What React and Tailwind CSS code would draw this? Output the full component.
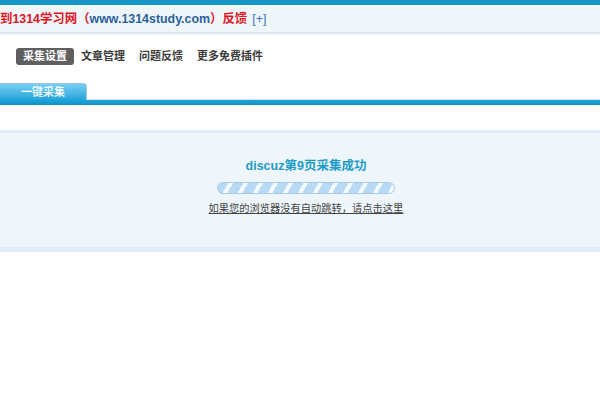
import React from 'react';

const cjk = { fontFamily: '"Liberation Sans", "Noto Sans CJK SC", sans-serif' };

export default function App() {
  const nav = ['采集设置', '文章管理', '问题反馈', '更多免费插件'];

  return (
    <div className="w-[600px] h-[396px] bg-white overflow-hidden" style={cjk}>
      {/* top header */}
      <div className="h-[5px] bg-[#1896c4]" />
      <div className="h-[27px] bg-[#eef6fa] border-t border-[#f6fbe8] flex items-center overflow-hidden">
        <div className="whitespace-nowrap text-[12.4px] font-bold leading-none">
          <span className="text-[#e0151f]">到1314学习网（</span>
          <span className="text-[#2d5f9a]">www.1314study.com</span>
          <span className="text-[#e0151f]">）反馈</span>
          <span className="ml-[5px] font-normal text-[#3f74b0]">[+]</span>
        </div>
      </div>
      <div className="h-[3px] bg-gradient-to-b from-[#d3e0e9] to-[#f4f8fb]" />

      {/* nav */}
      <div className="flex items-center pl-[16px] mt-[13px] h-[17px]">
        {nav.map((n, i) => (
          <div
            key={n}
            className={
              'h-[17px] px-[7px] flex items-center text-[11px] font-bold rounded-[3px] ' +
              (i === 0 ? 'bg-[#5f5f5f] text-white' : 'text-[#3a3a3a]')
            }
          >
            {n}
          </div>
        ))}
      </div>

      {/* tab */}
      <div className="mt-[18px] flex items-end h-[17px]">
        <div className="w-[87px] h-[17px] rounded-tr-[4px] border-r border-t border-[#9fc6d8] bg-gradient-to-b from-[#74d0f3] to-[#1fa3d9] text-white text-[11px] font-medium flex items-center justify-center">
          一键采集
        </div>
        <div className="flex-1 h-[2px] border-b border-[#d7e6ee]" />
      </div>
      <div className="h-[5px] bg-gradient-to-b from-[#1aa5da] to-[#1390c4]" />

      {/* message panel */}
      <div className="mt-[25px] border-t-[3px] border-b-[5px] border-[#ddedf8] bg-[#eef6fc] h-[122px] flex flex-col items-center pt-[26px] pl-[12px]">
        <div className="text-[12.5px] font-bold text-[#1f9cc6] leading-[15px]">discuz第9页采集成功</div>
        <div className="mt-[8px] w-[178px] h-[12px] rounded-full border border-[#a7cbe6] bg-[repeating-linear-gradient(120deg,#b9daf4_0px,#b9daf4_9px,#f4faff_9px,#f4faff_13px)]" />
        <a href="#" className="mt-[8px] text-[10.25px] text-[#444] underline leading-[14px]">
          如果您的浏览器没有自动跳转，请点击这里
        </a>
      </div>
    </div>
  );
}
